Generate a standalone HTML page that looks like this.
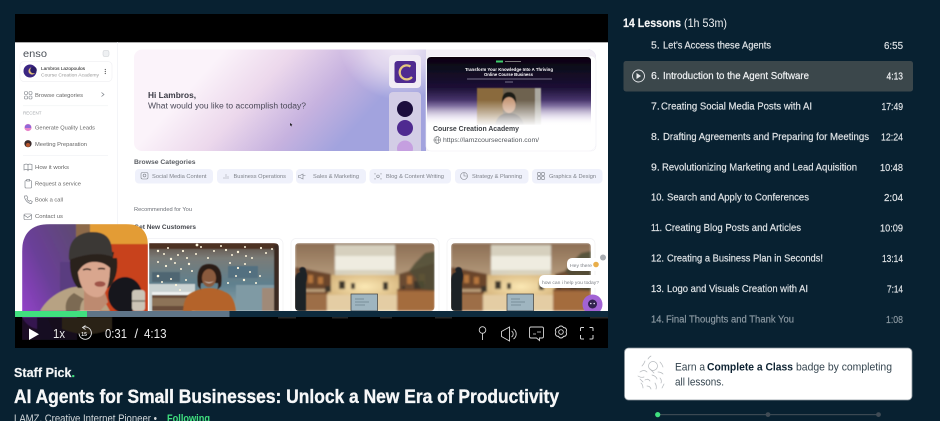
<!DOCTYPE html>
<html lang="en"><head><meta charset="utf-8"><title>AI Agents for Small Businesses</title>
<style>html,body{margin:0;padding:0;background:#082131;width:940px;height:421px;overflow:hidden}svg{display:block}text{font-family:"Liberation Sans",sans-serif}</style></head>
<body>
<svg width="940" height="421" viewBox="0 0 940 421" xmlns="http://www.w3.org/2000/svg">
<defs>
<linearGradient id="hero" gradientUnits="userSpaceOnUse" x1="215" y1="60" x2="325" y2="160"><stop offset="0" stop-color="#fbf3fa"/><stop offset=".35" stop-color="#ecd8ec"/><stop offset=".7" stop-color="#c6b2df"/><stop offset="1" stop-color="#a2a3de"/></linearGradient>
<radialGradient id="herotop" gradientUnits="userSpaceOnUse" cx="400" cy="38" r="62"><stop offset="0" stop-color="#f6f0f8" stop-opacity="1"/><stop offset=".55" stop-color="#f0e6f3" stop-opacity=".7"/><stop offset="1" stop-color="#f0e6f3" stop-opacity="0"/></radialGradient>
<linearGradient id="site" x1="0" y1="0" x2="0" y2="1"><stop offset="0" stop-color="#07040f"/><stop offset=".45" stop-color="#1c1035"/><stop offset=".72" stop-color="#5b4684"/><stop offset=".9" stop-color="#cdbfe0"/><stop offset="1" stop-color="#fff"/></linearGradient>
<linearGradient id="pfade" x1="0" y1="0" x2="0" y2="1"><stop offset="0" stop-color="#fff" stop-opacity="0"/><stop offset="1" stop-color="#fff" stop-opacity=".95"/></linearGradient>
<linearGradient id="purp" x1="1" y1="0" x2="0" y2="1"><stop offset="0" stop-color="#5d4a70"/><stop offset=".5" stop-color="#6a3f98"/><stop offset="1" stop-color="#a045d8"/></linearGradient>
<linearGradient id="ceil" x1="0" y1="0" x2="0" y2="1"><stop offset="0" stop-color="#8c6e54"/><stop offset=".4" stop-color="#ad9274"/><stop offset="1" stop-color="#c9a97c"/></linearGradient>
<radialGradient id="glow" cx=".5" cy=".55" r=".5"><stop offset="0" stop-color="#fbe8b4"/><stop offset="1" stop-color="#fbe8b4" stop-opacity="0"/></radialGradient>
<linearGradient id="office1" x1="0" y1="0" x2="0" y2="1"><stop offset="0" stop-color="#5e4c40"/><stop offset=".22" stop-color="#7a7c78"/><stop offset=".6" stop-color="#5f808e"/><stop offset="1" stop-color="#90a6ac"/></linearGradient>
<filter id="all" x="0" y="0" width="100%" height="100%"><feGaussianBlur stdDeviation=".28"/></filter>
<filter id="b1" x="-5%" y="-5%" width="110%" height="110%"><feGaussianBlur stdDeviation="1"/></filter>
<filter id="b05" x="-5%" y="-5%" width="110%" height="110%"><feGaussianBlur stdDeviation=".6"/></filter>
<clipPath id="vid"><rect x="15" y="42" width="593" height="269"/></clipPath>
<clipPath id="camclip"><path d="M22 340V252Q22 224 50 224H126Q148 224 148 246V340Z"/></clipPath>
<clipPath id="p1"><path d="M149 311V243H274Q279 243 279 248V311Z"/></clipPath>
<clipPath id="p2"><rect x="295" y="243" width="139.500" height="68" rx="4"/></clipPath>
<clipPath id="p3"><rect x="451" y="243" width="140" height="68" rx="4"/></clipPath>
<clipPath id="hc"><rect x="134" y="49.500" width="462" height="101.500" rx="8"/></clipPath>
<clipPath id="sc"><path d="M427 125V61Q427 57 431 57H587Q591 57 591 61V125Z"/></clipPath>
<g id="officep">
<g filter="url(#b1)">
<rect width="140" height="68" fill="url(#ceil)"/>
<rect x="40" y="2" width="60" height="32" fill="#d6d0be"/>
<rect x="40" y="13" width="60" height="14" fill="#efece0"/>
<rect x="30" y="32" width="80" height="22" fill="#d4b27a"/>
<rect x="26" y="26" width="88" height="32" fill="url(#glow)"/>
<path d="M0 24L36 31V46H0Z" fill="#6a452c"/>
<path d="M140 20L104 31V46H140Z" fill="#6a4c30"/>
<path d="M3 30h5v8h-5zM13 32h5v8h-5zM23 34h5v7h-5zM112 33h5v8h-5zM124 31h6v10h-6z" fill="#b5763e"/>
<g fill="#3d352c"><rect x="30" y="43" width="6" height="6"/><rect x="44" y="38" width="6" height="8"/><rect x="56" y="40" width="4" height="6"/><rect x="88" y="39" width="5" height="8"/><rect x="107" y="43" width="3" height="7"/><rect x="119" y="38" width="10" height="9"/></g>
<path d="M0 50H32V68H0Z" fill="#9d6e46"/><path d="M102 47H140V68H102Z" fill="#a46c3e"/>
<path d="M32 52H102V68H32Z" fill="#e4cda4"/>
<rect x="102" y="46" width="38" height="2" fill="#74482a"/><rect x="0" y="49" width="33" height="2" fill="#74482a"/>
<path d="M140 8L130 10 120 20 114 28 120 34 126 46 140 48Z" fill="#4d4c35" opacity=".85"/>
</g>
<g filter="url(#b05)"><path d="M0 68V38Q0 30 5 29Q3 25 7 24Q11 24 11 28Q13 32 11 40V68Z" fill="#1f2028"/></g>
<rect x="56" y="51" width="26.500" height="17" fill="#9fb5c0" stroke="#3c3c3c" stroke-width=".7"/>
<path d="M60 56h9M60 59h14M60 62h10" stroke="#6d838d" stroke-width=".7"/>
</g>
</defs>

<rect width="940" height="421" fill="#082131"/>
<g filter="url(#all)">
<!-- Video frame -->
<rect x="15" y="14" width="593" height="334" fill="#000"/>
<rect x="15" y="42" width="593" height="269" fill="#fff"/>
<rect x="15" y="42" width="593" height=".7" fill="#888"/>

<g clip-path="url(#vid)">
<!-- Sidebar -->
<rect x="117" y="42" width=".6" height="269" fill="#eceef2"/>
<text x="23" y="57" font-size="10" fill="#4a4f57" textLength="24" lengthAdjust="spacingAndGlyphs">enso</text>
<rect x="103" y="50.500" width="6" height="6" rx="1.500" fill="#eef0f2" stroke="#c8ccd0" stroke-width=".5"/>
<rect x="20" y="61.500" width="92" height="20" rx="4" fill="#fff" stroke="#f1f1f4" stroke-width=".7"/>
<circle cx="30" cy="71" r="6.500" fill="#3a2582"/><circle cx="32" cy="71" r="3.600" fill="#e2c27a"/><circle cx="33.500" cy="70" r="3.300" fill="#2a1a66"/>
<text x="41" y="70" font-size="4.600" fill="#444" stroke="#444" stroke-width=".1" textLength="44" lengthAdjust="spacingAndGlyphs">Lambros Lazopoulos</text>
<text x="41" y="76.500" font-size="4.600" fill="#999" textLength="58" lengthAdjust="spacingAndGlyphs">Course Creation Academy</text>
<g fill="#555"><circle cx="105.300" cy="69.500" r=".6"/><circle cx="105.300" cy="71.500" r=".6"/><circle cx="105.300" cy="73.500" r=".6"/></g>
<g fill="none" stroke="#7a7f86" stroke-width=".6"><rect x="24.500" y="91.500" width="3" height="3" rx="1"/><rect x="29" y="91.500" width="3" height="3" rx="1"/><rect x="24.500" y="96" width="3" height="3" rx="1"/><rect x="29" y="96" width="3" height="3" rx="1"/><path d="M101.500 92.500l2.500 2-2.500 2" stroke-width=".7"/></g>
<text x="35" y="97" font-size="5.200" fill="#666" textLength="48" lengthAdjust="spacingAndGlyphs">Browse categories</text>
<rect x="23" y="105.500" width="85" height=".6" fill="#eef0f2"/>
<text x="23" y="114.500" font-size="4.200" fill="#a4a8ac" textLength="18.500" lengthAdjust="spacingAndGlyphs">RECENT</text>
<circle cx="28" cy="127.500" r="3.600" fill="#e883c8"/><path d="M25 126a3.600 3.600 0 0 1 6 0v2h-6z" fill="#8f6ad8"/>
<text x="35" y="129.500" font-size="5.200" fill="#666" textLength="60" lengthAdjust="spacingAndGlyphs">Generate Quality Leads</text>
<circle cx="28" cy="143.700" r="3.600" fill="#3a2a2a"/><circle cx="28" cy="145" r="2" fill="#b5552e"/>
<text x="35" y="146" font-size="5.200" fill="#666" textLength="52" lengthAdjust="spacingAndGlyphs">Meeting Preparation</text>
<rect x="23" y="155" width="85" height=".6" fill="#eef0f2"/>
<g fill="none" stroke="#72777e" stroke-width=".6">
<path d="M24 164.500q3.500-1 4 .5q.5-1.500 4-.5v5.500q-3.500-1-4 .5q-.5-1.500-4-.5zM28 165v5.500"/>
<rect x="25" y="180.500" width="6.500" height="7.500" rx="1"/><rect x="26.700" y="179.500" width="3" height="1.500" fill="#fff"/>
<path d="M24.500 196c0 4 3.500 7.500 7 7.500l.8-2-2-1-1 .8a5 5 0 0 1-2.500-2.500l1-1-1-2z"/>
<rect x="24" y="214" width="7.500" height="5.500" rx="1"/><path d="M24 215l3.700 2.500 3.800-2.500"/>
</g>
<text x="35" y="169" font-size="5.200" fill="#666" textLength="34" lengthAdjust="spacingAndGlyphs">How it works</text>
<text x="35" y="185.500" font-size="5.200" fill="#666" textLength="46" lengthAdjust="spacingAndGlyphs">Request a service</text>
<text x="35" y="201.700" font-size="5.200" fill="#666" textLength="28" lengthAdjust="spacingAndGlyphs">Book a call</text>
<text x="35" y="218" font-size="5.200" fill="#666" textLength="28" lengthAdjust="spacingAndGlyphs">Contact us</text>

<!-- Hero -->
<g clip-path="url(#hc)">
<rect x="134" y="49.500" width="462" height="101.500" fill="url(#hero)"/>
<rect x="134" y="49.500" width="462" height="101.500" fill="url(#herotop)"/>
<rect x="389" y="55" width="32" height="33" rx="4" fill="#f1ecf5"/>
<rect x="389" y="92" width="32" height="64" rx="4" fill="#d3cde6"/>
<rect x="394.500" y="61" width="21.500" height="22" rx="3" fill="#4f2b90"/>
<path d="M410.500 66.500a7 7 0 1 0 1.500 10.500" fill="none" stroke="#e6c87e" stroke-width="2.300"/>
<circle cx="405" cy="109" r="8" fill="#1a0e3c"/><circle cx="405" cy="128" r="8" fill="#4f2a90"/><circle cx="405" cy="148.500" r="8" fill="#c59fe0"/>
<rect x="426" y="49" width="171" height="103" fill="#f3eff6"/>
<rect x="426" y="56" width="170" height="95" rx="5" fill="#fff"/>
</g>
<rect x="426" y="56" width="170" height="95" rx="5" fill="none" stroke="#efeef3" stroke-width=".6"/>
<g clip-path="url(#sc)">
<rect x="427" y="57" width="164" height="68" fill="url(#site)"/>
<rect x="496" y="60.500" width="7" height="2" fill="#3ccf6c"/>
<rect x="505" y="61" width="16" height="1" fill="#777"/>
<text x="465" y="71" font-size="4.600" font-weight="bold" fill="#fff" textLength="88" lengthAdjust="spacingAndGlyphs">Transform Your Knowledge Into A Thriving</text>
<text x="484" y="76" font-size="4.600" font-weight="bold" fill="#fff" textLength="49" lengthAdjust="spacingAndGlyphs">Online Course Business</text>
<rect x="467" y="78.500" width="85" height="1" fill="#77718a"/><rect x="505" y="81.500" width="8" height="1" fill="#77718a"/>
<g filter="url(#b05)">
<rect x="477" y="88" width="64" height="37" fill="#6e6250"/>
<rect x="477" y="88" width="26" height="37" fill="#8a6a3e"/>
<rect x="535" y="88" width="6" height="37" fill="#aaa8a0"/>
<path d="M495 125q2-12 14-12q12 0 15 12z" fill="#37332e"/>
<ellipse cx="509" cy="105" rx="6.500" ry="8" fill="#c89a7a"/>
<path d="M502 104q-1-12 7-12t7 12q-2-7-7-7t-7 7z" fill="#1e1a18"/>
</g>
<rect x="427" y="100" width="164" height="25" fill="url(#pfade)"/>
</g>
<text x="433" y="131" font-size="7" font-weight="bold" fill="#3f4347" textLength="86" lengthAdjust="spacingAndGlyphs">Course Creation Academy</text>
<g fill="none" stroke="#55595e" stroke-width=".5"><circle cx="437.300" cy="140" r="3.400"/><ellipse cx="437.300" cy="140" rx="1.500" ry="3.400"/><path d="M434 140h6.600"/></g>
<text x="443" y="142" font-size="6" fill="#55595e" textLength="96" lengthAdjust="spacingAndGlyphs">https://lamzcoursecreation.com/</text>
<text x="148" y="98" font-size="8" font-weight="bold" fill="#3a3a44" textLength="48" lengthAdjust="spacingAndGlyphs">Hi Lambros,</text>
<text x="148" y="108.500" font-size="8" fill="#4b4a58" textLength="158" lengthAdjust="spacingAndGlyphs">What would you like to accomplish today?</text>
<path d="M290 123l0 3 .8-.8 .8 1.200 .5-.3-.7-1.100 1-.2z" fill="#222"/>

<!-- Categories -->
<text x="134" y="164" font-size="6.500" font-weight="bold" fill="#5a5d63" textLength="61.500" lengthAdjust="spacingAndGlyphs">Browse Categories</text>
<g fill="#eff1fb"><rect x="135" y="169" width="78" height="14.500" rx="4"/><rect x="217" y="169" width="76" height="14.500" rx="4"/><rect x="296" y="169" width="70" height="14.500" rx="4"/><rect x="369.500" y="169" width="81.500" height="14.500" rx="4"/><rect x="455" y="169" width="73.500" height="14.500" rx="4"/><rect x="532" y="169" width="70.500" height="14.500" rx="4"/></g>
<g font-size="5.200" fill="#7e828a">
<text x="152" y="178" textLength="54.500" lengthAdjust="spacingAndGlyphs">Social Media Content</text>
<text x="233.500" y="178" textLength="52.500" lengthAdjust="spacingAndGlyphs">Business Operations</text>
<text x="313" y="178" textLength="46" lengthAdjust="spacingAndGlyphs">Sales &amp; Marketing</text>
<text x="386" y="178" textLength="58" lengthAdjust="spacingAndGlyphs">Blog &amp; Content Writing</text>
<text x="472" y="178" textLength="50" lengthAdjust="spacingAndGlyphs">Strategy &amp; Planning</text>
<text x="549" y="178" textLength="47" lengthAdjust="spacingAndGlyphs">Graphics &amp; Design</text>
</g>
<g fill="none" stroke="#7e828a" stroke-width=".6">
<rect x="141" y="172.500" width="7" height="6.500" rx="1.500"/><circle cx="144.500" cy="175.500" r="1.400"/>
<path d="M224 179v-2M226 179v-5M228 179v-3" stroke="#a8acb4"/>
<path d="M303 174l-3 1.500h-1.500v2h1.500l3 1.500zM303 175.500h2.500"/>
<path d="M375 173v1.500M381 173v1.500M375 178v1.500M381 178v1.500"/><circle cx="378" cy="176.300" r="1.300"/>
<circle cx="464" cy="176" r="3.500"/><path d="M464 172.500v3.500h3.500"/>
<circle cx="539" cy="174" r="1.700"/><circle cx="543" cy="174" r="1.700"/><circle cx="539" cy="178" r="1.700"/><circle cx="543" cy="178" r="1.700"/>
</g>
<text x="134" y="211" font-size="5.200" fill="#6c7077" textLength="58" lengthAdjust="spacingAndGlyphs">Recommended for You</text>
<text x="134" y="229" font-size="6.300" font-weight="bold" fill="#44474d" textLength="62" lengthAdjust="spacingAndGlyphs">Get New Customers</text>

<!-- Cards -->
<g fill="#fff" stroke="#f0f0f3" stroke-width=".7"><rect x="145" y="238.500" width="138" height="80" rx="5"/><rect x="291" y="238.500" width="148" height="80" rx="5"/><rect x="447" y="238.500" width="148" height="80" rx="5"/></g>
<g clip-path="url(#p1)">
<g filter="url(#b05)">
<rect x="149" y="243" width="130" height="68" fill="url(#office1)"/>
<rect x="149" y="243" width="130" height="6" fill="#4e3222"/>
<rect x="152" y="272" width="28" height="10" fill="#4f6672"/><rect x="228" y="266" width="30" height="12" fill="#527080"/>
<rect x="149" y="284" width="46" height="27" fill="#c9d2d2"/>
<rect x="152" y="292" width="40" height="3" fill="#eef0ef"/>
<rect x="152" y="295" width="40" height="16" fill="#6a4e3a"/>
<rect x="152" y="298" width="40" height="8" fill="#8d7358"/>
<rect x="236" y="285" width="43" height="26" fill="#7f9aa4"/>
<rect x="262" y="288" width="12" height="23" fill="#a08a78"/>
<rect x="274" y="245" width="5" height="66" fill="#3a2a20"/>
</g>
<g fill="#fff6dc">
<circle cx="158" cy="251" r="1.200"/><circle cx="164" cy="254" r="1"/><circle cx="168" cy="248" r="1"/><circle cx="171" cy="259" r="1.200"/><circle cx="178" cy="255" r="1"/><circle cx="183" cy="251" r="1.100"/><circle cx="187" cy="258" r="1"/><circle cx="197" cy="245" r="1.400"/><circle cx="201" cy="247" r="1"/><circle cx="196" cy="254" r="1"/><circle cx="208" cy="258" r="1"/><circle cx="214" cy="251" r="1"/><circle cx="221" cy="246" r="1"/><circle cx="226" cy="250" r="1.100"/><circle cx="232" cy="255" r="1"/><circle cx="238" cy="252" r="1.200"/><circle cx="245" cy="247" r="1"/><circle cx="246" cy="256" r="1"/><circle cx="252" cy="258" r="1"/><circle cx="261" cy="248" r="1.100"/><circle cx="266" cy="253" r="1"/><circle cx="272" cy="249" r="1"/><circle cx="158" cy="262" r="1"/><circle cx="166" cy="266" r="1.100"/><circle cx="175" cy="263" r="1"/><circle cx="181" cy="269" r="1"/><circle cx="189" cy="264" r="1.200"/><circle cx="192" cy="271" r="1"/><circle cx="158" cy="276" r="1.300"/><circle cx="162" cy="282" r="1"/><circle cx="171" cy="279" r="1"/><circle cx="176" cy="285" r="1.100"/><circle cx="186" cy="280" r="1"/><circle cx="180" cy="290" r="1"/><circle cx="230" cy="263" r="1"/><circle cx="238" cy="268" r="1.100"/><circle cx="245" cy="264" r="1"/><circle cx="250" cy="272" r="1"/><circle cx="236" cy="276" r="1"/><circle cx="244" cy="280" r="1.200"/><circle cx="260" cy="276" r="1"/><circle cx="256" cy="283" r="1"/><circle cx="228" cy="283" r="1"/>
</g>
<g filter="url(#b05)">
<path d="M183 311q1-16 10-19q8-4 16-4q8 0 16 4q9 3 11 19z" fill="#b4632a"/>
<path d="M198 286q-3-22 11-22q15 0 12 22l-4 4q2-4 1-7h-17q-1 3 0 7z" fill="#2c1c17"/>
<ellipse cx="209" cy="278" rx="7" ry="9" fill="#8a5a3c"/>
<path d="M204 281q5 3 10 0q-5 4-10 0z" fill="#f4ede4"/>
</g>
</g>
<g clip-path="url(#p2)"><use href="#officep" x="295" y="243"/></g>
<g clip-path="url(#p3)"><use href="#officep" x="451" y="243"/></g>

<!-- Chat -->
<circle cx="603" cy="257.500" r="3" fill="#a9adb2"/>
<rect x="567" y="258" width="33" height="13" rx="5" fill="#fff"/>
<text x="570" y="267" font-size="4.800" fill="#7a7e84" textLength="22" lengthAdjust="spacingAndGlyphs">Hey there</text>
<circle cx="596" cy="264.500" r="2.800" fill="#e9ae4a"/>
<rect x="539" y="275" width="62.500" height="13" rx="5" fill="#fff"/>
<text x="542" y="284" font-size="4.800" fill="#7a7e84" textLength="57" lengthAdjust="spacingAndGlyphs">how can i help you today?</text>
<circle cx="592.500" cy="304.500" r="10" fill="#a263d4"/>
<circle cx="592.500" cy="304" r="4.500" fill="#31224f"/><circle cx="590.800" cy="303.500" r=".8" fill="#e8e2f5"/><circle cx="594.200" cy="303.500" r=".8" fill="#e8e2f5"/>
</g>

<!-- Progress bar -->
<rect x="15" y="311" width="593" height="6" fill="#0a2a3c"/>
<g fill="#4a4a4a" opacity=".55"><rect x="278" y="317" width="18" height="1.500"/><rect x="332" y="317" width="16" height="1.500"/><rect x="380" y="317" width="12" height="1.500"/><rect x="435" y="317" width="17" height="1.500"/><rect x="590" y="317" width="18" height="1.500"/></g>

<!-- Webcam -->
<g clip-path="url(#camclip)">
<g filter="url(#b05)">
<rect x="22" y="224" width="55" height="116" fill="url(#purp)"/>
<rect x="76" y="224" width="20" height="30" fill="#8d6a4a"/>
<rect x="90" y="224" width="58" height="22" fill="#e39c34"/>
<rect x="100" y="244" width="48" height="70" fill="#c8421c"/>
<rect x="60" y="262" width="20" height="30" fill="#5a3d80"/>
<!-- hoodie -->
<path d="M40 311q8-14 24-21q10-4 16-3l22 10 8 14z" fill="#b7a283"/>
<path d="M66 311q-2-12 8-18l10 6q-4 4-4 12z" fill="#7c6a52"/>
<!-- hair behind -->
<path d="M70 258q-1 20 8 30h30q11-10 9-30z" fill="#2b221c"/>
<!-- neck -->
<path d="M84 290h20l4 12-8 9H84z" fill="#bd8a70"/>
<!-- face -->
<path d="M77 258q0 32 14 38q7 3 12-1q8-8 7-37z" fill="#d9a68e"/>
<ellipse cx="100" cy="284" rx="5.500" ry="2.800" fill="#a0554a"/>
<path d="M83 270q4-2 8 0M98 269q3-1 7 0" stroke="#33231c" stroke-width="1.500" fill="none"/>
<!-- fringe -->
<path d="M72 252H114L111 269Q104 261 92 262Q82 263 77 274Z" fill="#2b221c"/>
<!-- cap -->
<path d="M69 260q-2-26 22-28q20-1 21 18l1 7q-18-7-44 3z" fill="#3b3936"/>
<!-- mic -->
<ellipse cx="125" cy="295" rx="17" ry="18" fill="#17181d"/>
<rect x="132" y="290" width="13" height="21" rx="3" fill="#cbc4b6"/>
<rect x="132" y="300" width="13" height="2" fill="#8d8a80"/>
<!-- dim below bar -->
<rect x="22" y="317" width="126" height="23" fill="#000" opacity=".82"/>
<path d="M22 317h15v12q-10-2-15-12z" fill="#35184f"/>
<path d="M62 317h50v12q-26 10-50 0z" fill="#2a2219"/>
</g></g>
<rect x="15" y="311" width="72" height="6" fill="#3fe07f"/>
<rect x="87" y="311" width="142.500" height="6" fill="#5f7588"/>

<!-- Controls -->
<path d="M29 328.500v11.500l10-5.700z" fill="#fff"/>
<text x="53" y="338" font-size="13" fill="#e8e8e8" textLength="12" lengthAdjust="spacingAndGlyphs">1x</text>
<g fill="none" stroke="#e6e6e6" stroke-width=".9"><path d="M82.500 327.500a6.200 6.200 0 1 1-3.500 6"/><path d="M85.500 325.500l-3 2 3 2" stroke-width=".8"/></g>
<text x="81.300" y="336" font-size="5" font-weight="bold" fill="#e6e6e6">15</text>
<text x="105" y="338" font-size="13" fill="#ececec" textLength="22" lengthAdjust="spacingAndGlyphs">0:31</text>
<text x="134.500" y="338" font-size="13" fill="#ececec">/</text>
<text x="144" y="338" font-size="13" fill="#ececec" textLength="22.500" lengthAdjust="spacingAndGlyphs">4:13</text>
<g fill="none" stroke="#d6d6d6" stroke-width=".9">
<circle cx="482.500" cy="330" r="3.300"/><path d="M482.500 333.300v6.700"/>
<path d="M501.500 331.500l8-4.500v14l-8-4.500zM511.500 331a3.500 3.500 0 0 1 0 6M513.500 329a6 6 0 0 1 0 10"/>
<path d="M531 327h11a1.500 1.500 0 0 1 1.500 1.500v8a1.500 1.500 0 0 1-1.500 1.500h-2.500v2.500l-3-2.500H531a1.500 1.500 0 0 1-1.500-1.500v-8a1.500 1.500 0 0 1 1.500-1.500z"/><path d="M533 334h3M537 332h4" stroke-width=".8"/>
<circle cx="561" cy="332" r="2.300"/><path d="M566 332A2.700 2.700 0 0 1 563.500 336.330A2.700 2.700 0 0 1 558.500 336.330A2.700 2.700 0 0 1 556 332A2.700 2.700 0 0 1 558.500 327.670A2.700 2.700 0 0 1 563.500 327.670A2.700 2.700 0 0 1 566 332Z"/>
<path d="M580.500 331v-2.500a1 1 0 0 1 1-1h2.500M589.500 327.500h2.500a1 1 0 0 1 1 1v2.500M593 335v3a1 1 0 0 1-1 1h-2.500M584 339h-2.500a1 1 0 0 1-1-1v-3" stroke-width="1"/>
</g>

<!-- Left text -->
<text x="14" y="377" font-size="12.500" font-weight="bold" fill="#f2f4f5" stroke="#f2f4f5" stroke-width=".2" textLength="61">Staff Pick<tspan fill="#3fe07f" stroke="#3fe07f">.</tspan></text>
<text x="14" y="403" font-size="19" font-weight="bold" fill="#f6f7f8" stroke="#f6f7f8" stroke-width=".35" textLength="545" lengthAdjust="spacingAndGlyphs">AI Agents for Small Businesses: Unlock a New Era of Productivity</text>
<text x="14" y="422" font-size="11" fill="#d4d9dc" textLength="143" lengthAdjust="spacingAndGlyphs">LAMZ, Creative Internet Pioneer •</text>
<text x="167" y="422" font-size="11" font-weight="bold" fill="#3fe07f" textLength="43" lengthAdjust="spacingAndGlyphs">Following</text>

<!-- Lessons -->
<text x="623" y="27" font-size="12" font-weight="bold" fill="#f5f6f7" stroke="#f5f6f7" stroke-width=".15" textLength="58" lengthAdjust="spacingAndGlyphs">14 Lessons</text>
<text x="684" y="27" font-size="12" fill="#eceef0" textLength="43" lengthAdjust="spacingAndGlyphs">(1h 53m)</text>
<rect x="623.500" y="61" width="289.500" height="30.500" rx="2.500" fill="#3b464c"/>
<circle cx="638.500" cy="76" r="6" fill="none" stroke="#e6e8ea" stroke-width=".9"/><path d="M636.500 73v6l4.500-3z" fill="#e6e8ea"/>
<g font-size="10.500" fill="#dfe3e6" stroke="#dfe3e6" stroke-width=".18">
<text x="651" y="48.500">5.</text><text x="663" y="48.500" textLength="108" lengthAdjust="spacingAndGlyphs">Let's Access these Agents</text><text x="884" y="49" textLength="19" lengthAdjust="spacingAndGlyphs">6:55</text>
<g fill="#f2f4f5" stroke="#f2f4f5"><text x="651" y="79">6.</text><text x="663" y="79" textLength="146" lengthAdjust="spacingAndGlyphs">Introduction to the Agent Software</text><text x="886.500" y="79.500" textLength="16.500" lengthAdjust="spacingAndGlyphs">4:13</text></g>
<text x="651" y="109.500">7.</text><text x="661" y="109.500" textLength="151" lengthAdjust="spacingAndGlyphs">Creating Social Media Posts with AI</text><text x="881.500" y="110" textLength="21.500" lengthAdjust="spacingAndGlyphs">17:49</text>
<text x="651" y="140">8.</text><text x="663" y="140" textLength="206" lengthAdjust="spacingAndGlyphs">Drafting Agreements and Preparing for Meetings</text><text x="881" y="140.500" textLength="22" lengthAdjust="spacingAndGlyphs">12:24</text>
<text x="651" y="170.500">9.</text><text x="662" y="170.500" textLength="195" lengthAdjust="spacingAndGlyphs">Revolutionizing Marketing and Lead Aquisition</text><text x="880" y="171" textLength="23" lengthAdjust="spacingAndGlyphs">10:48</text>
<text x="651" y="200.500" textLength="13" lengthAdjust="spacingAndGlyphs">10.</text><text x="667" y="200.500" textLength="142" lengthAdjust="spacingAndGlyphs">Search and Apply to Conferences</text><text x="884" y="201" textLength="19" lengthAdjust="spacingAndGlyphs">2:04</text>
<text x="651" y="231" textLength="11" lengthAdjust="spacingAndGlyphs">11.</text><text x="665" y="231" textLength="136" lengthAdjust="spacingAndGlyphs">Creating Blog Posts and Articles</text><text x="880" y="231.500" textLength="23" lengthAdjust="spacingAndGlyphs">10:09</text>
<text x="651" y="261.500" textLength="13" lengthAdjust="spacingAndGlyphs">12.</text><text x="667" y="261.500" textLength="156" lengthAdjust="spacingAndGlyphs">Creating a Business Plan in Seconds!</text><text x="882" y="262" textLength="21" lengthAdjust="spacingAndGlyphs">13:14</text>
<text x="651" y="292" textLength="13" lengthAdjust="spacingAndGlyphs">13.</text><text x="667" y="292" textLength="141" lengthAdjust="spacingAndGlyphs">Logo and Visuals Creation with AI</text><text x="887" y="292.500" textLength="16" lengthAdjust="spacingAndGlyphs">7:14</text>
<g fill="#8d9aa3" stroke="#8d9aa3"><text x="651" y="322.500" textLength="13" lengthAdjust="spacingAndGlyphs">14.</text><text x="666" y="322.500" textLength="128" lengthAdjust="spacingAndGlyphs">Final Thoughts and Thank You</text><text x="886" y="323" textLength="17" lengthAdjust="spacingAndGlyphs">1:08</text></g>
</g>

<!-- Badge card -->
<rect x="624.500" y="348" width="287.500" height="52" rx="4" fill="#fff" stroke="#8b959c" stroke-width=".8"/>
<g fill="none" stroke="#b4b8bc" stroke-width=".7" stroke-linecap="round">
<circle cx="653" cy="366" r="4.500"/><path d="M640 372q4-3 7 0M638 376q3 2 6 1M645 380q3-2 5 1M652 375q4 1 5 4M658 372q3 0 5 2M660 378q2 2 1 5M641 383q2 2 2 5M647 386q3 0 4 3M655 383q2 3 1 6M660 362q2 2 3 5M642 366q2-2 3-5M648 359q1-2 3-3M640 379l3 3M650 369l4 4M664 384l-2 4"/>
</g>
<text x="675" y="370.500" font-size="11" fill="#34444f" textLength="30" lengthAdjust="spacingAndGlyphs">Earn a</text>
<text x="707" y="370.500" font-size="11" font-weight="bold" fill="#102433" textLength="86" lengthAdjust="spacingAndGlyphs">Complete a Class</text>
<text x="796" y="370.500" font-size="11" fill="#34444f" textLength="96" lengthAdjust="spacingAndGlyphs">badge by completing</text>
<text x="675" y="385.500" font-size="11" fill="#34444f" textLength="49" lengthAdjust="spacingAndGlyphs">all lessons.</text>

<!-- Pager -->
<rect x="658" y="414" width="221" height="1.200" fill="#3b4a52"/>
<circle cx="768" cy="414.600" r="2.400" fill="#3f4c54"/><circle cx="878.500" cy="414.600" r="2.400" fill="#3f4c54"/>
<circle cx="657.700" cy="414.600" r="2.600" fill="#3fe07f"/>
</g>
</svg>
</body></html>
